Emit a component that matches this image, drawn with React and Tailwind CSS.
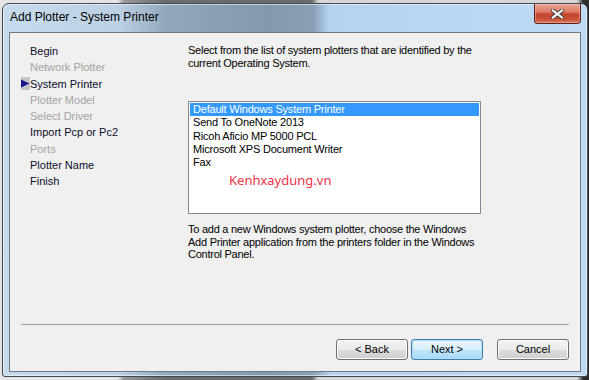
const ui = { fontFamily: '"Liberation Sans", Arial, sans-serif' };

const steps = [
  { label: 'Begin', on: true },
  { label: 'Network Plotter', on: false },
  { label: 'System Printer', on: true, current: true },
  { label: 'Plotter Model', on: false },
  { label: 'Select Driver', on: false },
  { label: 'Import Pcp or Pc2', on: true },
  { label: 'Ports', on: false },
  { label: 'Plotter Name', on: true },
  { label: 'Finish', on: true },
];

const plotters = [
  'Default Windows System Printer',
  'Send To OneNote 2013',
  'Ricoh Aficio MP 5000 PCL',
  'Microsoft XPS Document Writer',
  'Fax',
];

function CloseButton() {
  return (
    <div className="mr-[6px] flex h-[20px] w-[47px] items-center justify-center rounded-b-[4px] border border-t-0 border-[#5b2219] bg-[linear-gradient(180deg,#e9a898_0%,#dc7c68_40%,#c4452e_55%,#c95038_80%,#dc7a62_100%)] shadow-[inset_0_0_0_1px_rgba(255,200,190,0.45)]">
      <svg width="13" height="10" viewBox="0 0 13 10">
        <path d="M2 1.5 L11 8.5 M11 1.5 L2 8.5" stroke="#3a3a3a" strokeWidth="4" strokeLinecap="square" />
        <path d="M2 1.5 L11 8.5 M11 1.5 L2 8.5" stroke="#ffffff" strokeWidth="2.2" strokeLinecap="square" />
      </svg>
    </div>
  );
}

function StepList() {
  return (
    <div className="w-[178px] shrink-0 pt-[10px] pl-[11px]">
      {steps.map((s) => (
        <div key={s.label} className="flex h-[16.25px] items-center">
          <div className="flex h-[13px] w-[9px] items-center">
            {s.current && (
              <div className="flex h-[13px] w-[9px] items-center bg-[#c4c4c4]">
                <svg width="9" height="9" viewBox="0 0 9 9">
                  <path d="M0 0.5 L8.5 4.5 L0 8.5 Z" fill="#16168a" />
                </svg>
              </div>
            )}
          </div>
          <span className={`text-[11px] leading-[16px] ${s.on ? 'text-[#0c0c2a]' : 'text-[#a3a3a3]'}`}>
            {s.label}
          </span>
        </div>
      ))}
    </div>
  );
}

function Button({ children, primary }) {
  return (
    <div
      className={`flex h-[21px] w-[72px] items-center justify-center rounded-[3px] border text-[11px] text-black ${
        primary
          ? 'border-[#3c7fb1] bg-[linear-gradient(180deg,#eaf6fd_0%,#d9f0fc_50%,#bee6fd_51%,#a7d9f5_100%)] shadow-[inset_0_0_0_1px_#b3dcf2]'
          : 'border-[#707070] bg-[linear-gradient(180deg,#f2f2f2_0%,#ebebeb_50%,#dddddd_51%,#cfcfcf_100%)] shadow-[inset_0_0_0_1px_#fcfcfc]'
      }`}
    >
      {children}
    </div>
  );
}

export default function App() {
  return (
    <div
      className="h-[380px] w-[589px] overflow-hidden bg-[linear-gradient(90deg,#e4e4e4_0%,#e4e4e4_20%,#9a9a9a_21%,#6c6c6c_28%,#6c6c6c_53%,#d6d6d6_54%,#d6d6d6_98%,#2e2e2e_99%)] pt-[3px] pl-[2px]"
      style={ui}
    >
      <div className="flex h-[374px] w-[586px] flex-col rounded-t-[7px] rounded-b-[3px] border border-[#3d4a57] bg-[linear-gradient(90deg,#c7dbee_0%,#bcd0e3_20%,#91a7bb_28%,#8299ae_45%,#899fb5_53%,#b6d2ef_56%,#c0daf4_100%)] shadow-[inset_0_0_0_1px_rgba(255,255,255,0.55)]">
        {/* title bar */}
        <div className="flex h-[28px] items-start justify-between">
          <div className="pt-[5px] pl-[7px] text-[12px] leading-[16px] text-black">
            Add Plotter - System Printer
          </div>
          <CloseButton />
        </div>

        {/* client area */}
        <div className="mx-[6px] flex h-[340px] flex-col border border-[#6b7886] bg-[#f0f0f0]">
          <div className="flex h-[291px]">
            <StepList />
            <div className="flex flex-col pt-[11px]">
              <p className="w-[295px] text-[11px] leading-[13px] tracking-[-0.25px] text-black">
                Select from the list of system plotters that are identified by the current Operating System.
              </p>
              <div className="relative mt-[31px] h-[113px] w-[293px] border border-[#828790] bg-white p-[1px]">
                {plotters.map((p, i) => (
                  <div
                    key={p}
                    className={`h-[13.25px] pl-[3px] text-[11px] leading-[13px] tracking-[-0.2px] ${
                      i === 0 ? 'bg-[#3399ff] text-white' : 'text-black'
                    }`}
                  >
                    {p}
                  </div>
                ))}
                <span
                  className="absolute top-[70px] left-[40px] text-[13px] leading-[16px] text-[#ef3247]"
                  style={{ fontFamily: '"Noto Sans", "Open Sans", sans-serif' }}
                >
                  Kenhxaydung.vn
                </span>
              </div>
              <p className="mt-[9px] w-[295px] text-[11px] leading-[12.7px] tracking-[-0.25px] text-black">
                To add a new Windows system plotter, choose the Windows Add Printer application from the printers folder in the Windows Control Panel.
              </p>
            </div>
          </div>

          <div className="mx-[11px] h-px bg-[#a0a0a0]" />

          <div className="mt-[14px] flex justify-end pr-[11px]">
            <Button>&lt; Back</Button>
            <div className="w-[3px]" />
            <Button primary>Next &gt;</Button>
            <div className="w-[14px]" />
            <Button>Cancel</Button>
          </div>
        </div>
      </div>
    </div>
  );
}
